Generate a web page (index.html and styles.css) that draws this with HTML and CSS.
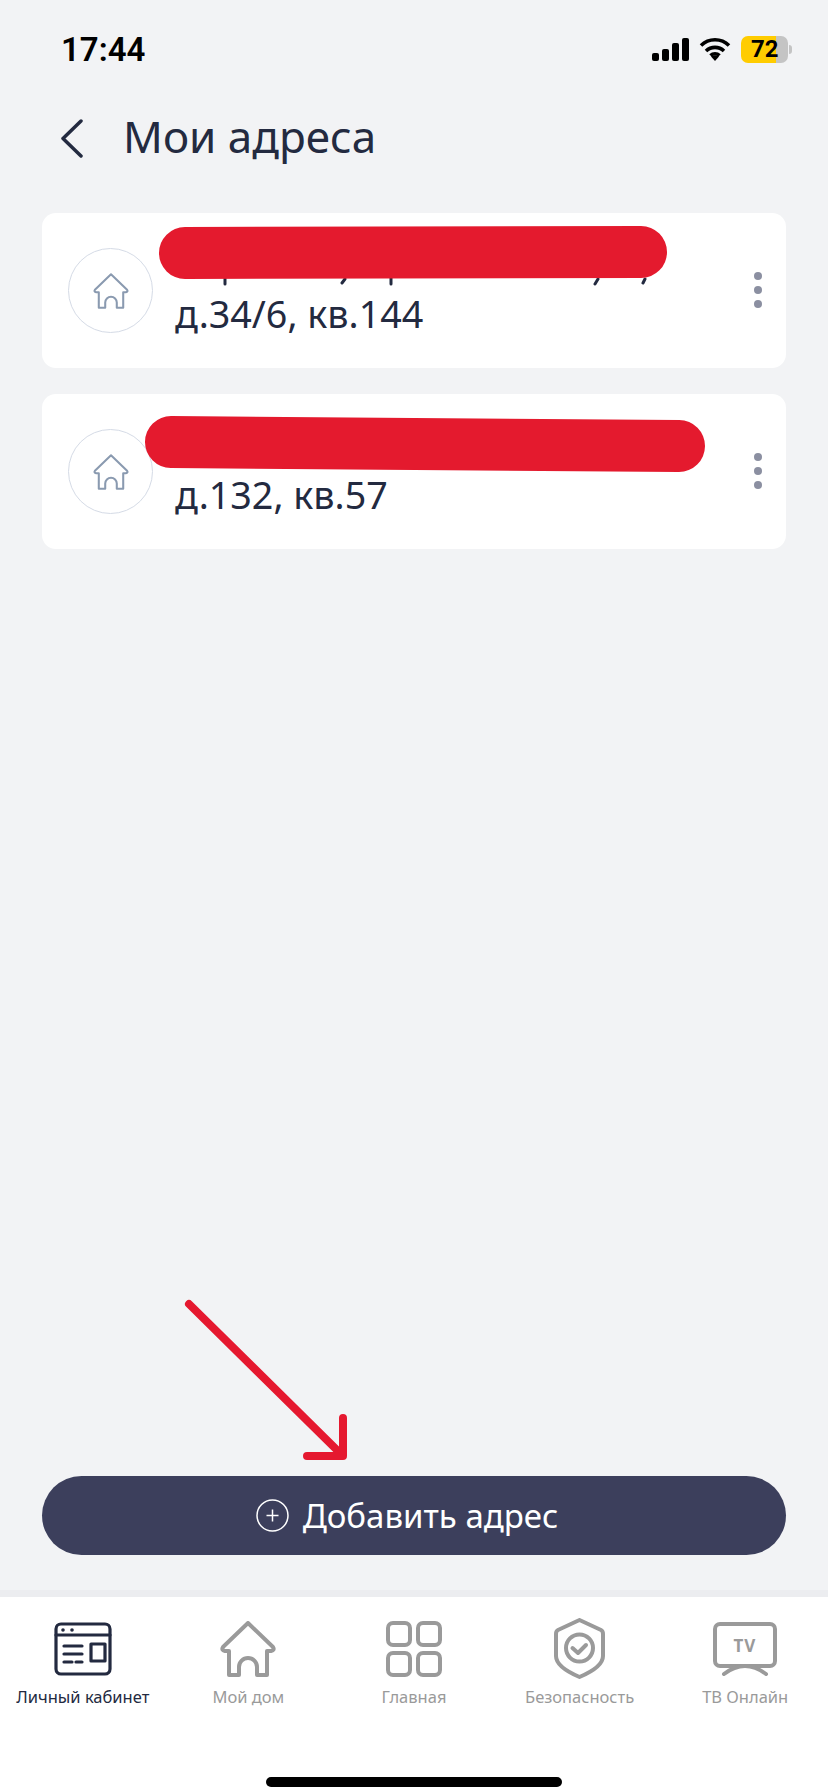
FILE: index.html
```html
<!DOCTYPE html>
<html lang="ru">
<head>
    <meta charset="UTF-8">
    <title>Мои адреса</title>
    <link rel="stylesheet" href="styles.css">
</head>
<body>
    <svg class="defs" width="0" height="0">
        <symbol id="ic-home" viewBox="0 0 56 56">
            <path d="M28 2 L53 26 Q55 29 51 30 L47 30 L47 54 L37 54 L37 46 A9 9 0 0 0 19 46 L19 54 L9 54 L9 30 L5 30 Q1 29 3 26 Z"/>
        </symbol>
    </svg>

    <div class="status">
        <span class="time">17:44</span>
        <div class="status-icons">
            <div class="signal"><i></i><i></i><i></i><i></i></div>
            <svg class="wifi" width="32" height="24" viewBox="0 0 32 24">
                <path d="M2 8.5 A20 20 0 0 1 30 8.5 M7 14 A13 13 0 0 1 25 14 M11.5 18.5 A6.5 6.5 0 0 1 20.5 18.5" fill="none" stroke="#000" stroke-width="3.6"/>
                <path d="M16 24 L12 19.5 Q16 17 20 19.5 Z"/>
            </svg>
            <div class="battery">72</div>
        </div>
    </div>

    <div class="header">
        <svg class="back" width="23" height="39" viewBox="0 0 23 39">
            <path d="M21 2 L3 19.5 L21 37"/>
        </svg>
        <h1>Мои адреса</h1>
    </div>

    <div class="content">
        <div class="card">
            <div class="card-icon">
                <svg width="36" height="36"><use href="#ic-home"/></svg>
            </div>
            <div class="card-text">
                <div class="line-hidden"></div>
                <div class="line">д.34/6, кв.144</div>
            </div>
            <div class="dots"><i></i><i></i><i></i></div>
            <!-- marker over the first line of the address -->
            <svg class="scribble" viewBox="0 0 744 155">
                <path class="tick" d="M183 65 V71 M349 65 V71 M556 66 L553 71 M603 66 L601 70 M303 66 L300 70"/>
                <path class="marker" d="M143 40 L599 39"/>
            </svg>
        </div>
        <div class="card">
            <div class="card-icon">
                <svg width="36" height="36"><use href="#ic-home"/></svg>
            </div>
            <div class="card-text">
                <div class="line-hidden"></div>
                <div class="line">д.132, кв.57</div>
            </div>
            <div class="dots"><i></i><i></i><i></i></div>
            <svg class="scribble" viewBox="0 0 744 155">
                <path class="marker" d="M129 48 L637 52"/>
            </svg>
        </div>
    </div>

    <!-- red arrow pointing at the button -->
    <svg class="arrow" width="828" height="200" viewBox="0 0 828 200">
        <path d="M189 24 L341 174 M343 138 L343 176 L307 176"/>
    </svg>

    <button class="add-btn">
        <svg width="33" height="33" viewBox="0 0 33 33">
            <circle cx="16.5" cy="16.5" r="15.5"/>
            <path d="M16.5 10.5 V22.5 M10.5 16.5 H22.5"/>
        </svg>
        Добавить адрес
    </button>

    <div class="tabbar">
        <div class="tabs">
            <div class="tab active">
                <div class="tab-icon">
                    <svg class="thin" width="58" height="54" viewBox="0 0 58 54">
                        <rect x="2" y="2" width="54" height="50" rx="5"/>
                        <path d="M2 13 H56 M10 24 H28 M10 32 H28 M10 40 H18 M22 40 H28"/>
                        <rect x="37" y="22" width="14" height="17"/>
                        <circle class="solid" cx="9" cy="8" r="1.8"/>
                        <circle class="solid" cx="18" cy="8" r="1.8"/>
                    </svg>
                </div>
                <span>Личный кабинет</span>
            </div>
            <div class="tab">
                <div class="tab-icon">
                    <svg width="56" height="56"><use href="#ic-home"/></svg>
                </div>
                <span>Мой дом</span>
            </div>
            <div class="tab">
                <div class="tab-icon">
                    <svg width="56" height="56" viewBox="0 0 56 56">
                        <rect x="2" y="2" width="22" height="22" rx="5"/>
                        <rect x="32" y="2" width="22" height="22" rx="5"/>
                        <rect x="2" y="32" width="22" height="22" rx="5"/>
                        <rect x="32" y="32" width="22" height="22" rx="5"/>
                    </svg>
                </div>
                <span>Главная</span>
            </div>
            <div class="tab">
                <div class="tab-icon">
                    <svg width="51" height="61" viewBox="0 0 51 61">
                        <path d="M25.5 2 L47 12 Q49 13 49 16 L49 38 Q49 49 25.5 59 Q2 49 2 38 L2 16 Q2 13 4 12 Z"/>
                        <circle cx="25.5" cy="30" r="13.5"/>
                        <path d="M18.5 30 L24 35 L32 27"/>
                    </svg>
                </div>
                <span>Безопасность</span>
            </div>
            <div class="tab">
                <div class="tab-icon">
                    <svg width="64" height="54" viewBox="0 0 64 54">
                        <rect x="2" y="2" width="60" height="42" rx="5"/>
                        <path d="M11 52 Q32 36 53 52"/>
                        <text class="tv-text" x="32" y="30">TV</text>
                    </svg>
                </div>
                <span>ТВ Онлайн</span>
            </div>
        </div>
        <div class="home-bar"></div>
    </div>
</body>
</html>
```
FILE: styles.css
```css
* {
    box-sizing: border-box;
}

body {
    margin: 0;
    width: 828px;
    height: 1792px;
    background: #f2f3f5;
    font-family: "Noto Sans", sans-serif;
    color: #232a40;
    display: flex;
    flex-direction: column;
    position: relative;
    overflow: hidden;
}

.defs {
    position: absolute;
}

/* status bar */
.status {
    height: 92px;
    padding: 0 40px 0 61px;
    display: flex;
    justify-content: space-between;
    align-items: center;
    font-family: Roboto, sans-serif;
    color: #000;
}

.time {
    font-size: 33px;
    font-weight: 600;
    margin-top: 6px;
}

.status-icons {
    display: flex;
    align-items: center;
    gap: 10px;
    margin-top: 6px;
}

.signal {
    display: flex;
    align-items: flex-end;
    gap: 3px;
    height: 23px;
}

.signal i {
    width: 7px;
    background: #000;
    border-radius: 2px;
}

.signal i:nth-child(1) { height: 8px; }
.signal i:nth-child(2) { height: 12px; }
.signal i:nth-child(3) { height: 18px; }
.signal i:nth-child(4) { height: 23px; }

.battery {
    width: 47px;
    height: 27px;
    border-radius: 7px;
    background: linear-gradient(to right, #ffcc00 35px, #c4c4c4 35px);
    font-size: 24px;
    font-weight: 700;
    line-height: 27px;
    padding-left: 10px;
    position: relative;
}

.battery::after {
    content: "";
    position: absolute;
    left: 48px;
    top: 9px;
    width: 3px;
    height: 9px;
    background: #c4c4c4;
    border-radius: 0 3px 3px 0;
}

/* page title */
.header {
    height: 90px;
    padding-left: 60px;
    display: flex;
    align-items: center;
    margin-top: -1px;
}

.back {
    fill: none;
    stroke: #232a40;
    stroke-width: 3.5;
    stroke-linecap: round;
    stroke-linejoin: round;
    margin-top: 4px;
}

h1 {
    margin: 0 0 0 40px;
    font-size: 44px;
    font-weight: 400;
}

/* address list */
.content {
    flex: 1;
    padding: 32px 42px 0;
    display: flex;
    flex-direction: column;
    gap: 26px;
}

.card {
    height: 155px;
    background: #fff;
    border-radius: 14px;
    padding: 0 24px 0 26px;
    display: flex;
    align-items: center;
    position: relative;
}

.card-icon {
    width: 85px;
    height: 85px;
    border: 1.5px solid #d5dbe6;
    border-radius: 50%;
    display: flex;
    align-items: center;
    justify-content: center;
    flex-shrink: 0;
}

.card-icon svg {
    fill: none;
    stroke: #8a9ab0;
    stroke-width: 3.2;
    stroke-linejoin: round;
}

.card-text {
    flex: 1;
    margin-left: 22px;
}

.line-hidden {
    height: 47px;
}

.line {
    font-size: 37.7px;
    line-height: 50px;
}

.dots {
    display: flex;
    flex-direction: column;
    gap: 6px;
    margin-top: -2px;
}

.dots i {
    width: 8px;
    height: 8px;
    border-radius: 50%;
    background: #8b8fa1;
}

.scribble {
    position: absolute;
    left: 0;
    top: 0;
    width: 744px;
    height: 155px;
    fill: none;
    stroke-linecap: round;
}

.marker {
    stroke: #e41a2e;
    stroke-width: 52;
}

.tick {
    stroke: #232a40;
    stroke-width: 3;
}

.arrow {
    position: absolute;
    left: 0;
    top: 1280px;
    fill: none;
    stroke: #e5182f;
    stroke-width: 8;
    stroke-linecap: round;
    stroke-linejoin: round;
}

/* main action */
.add-btn {
    height: 79px;
    margin: 0 42px 42px;
    padding: 0 14px 0 0;
    border: 0;
    border-radius: 40px;
    background: #3c3f5c;
    color: #fff;
    font-family: inherit;
    font-size: 33px;
    display: flex;
    align-items: center;
    justify-content: center;
    gap: 14px;
}

.add-btn svg {
    fill: none;
    stroke: #fff;
    stroke-width: 1.5;
}

/* bottom navigation */
.tabbar {
    height: 195px;
    background: #fff;
    box-shadow: 0 -7px 0 #ecedf0;
    padding-top: 21px;
    display: flex;
    flex-direction: column;
    align-items: center;
}

.tabs {
    width: 100%;
    display: grid;
    grid-template-columns: repeat(5, 1fr);
}

.tab {
    display: flex;
    flex-direction: column;
    align-items: center;
    color: #9a9a9a;
    font-size: 16.5px;
    line-height: 22px;
}

.tab.active {
    color: #232a40;
}

.tab-icon {
    height: 61px;
    margin-bottom: 7px;
    display: flex;
    align-items: center;
}

.tab-icon svg {
    fill: none;
    stroke: currentColor;
    stroke-width: 4;
    stroke-linecap: round;
    stroke-linejoin: round;
}

.tab-icon .thin {
    stroke-width: 3.2;
}

.tab-icon .solid {
    fill: currentColor;
    stroke: none;
}

.tv-text {
    fill: currentColor;
    stroke: none;
    font-size: 17px;
    font-weight: 700;
    text-anchor: middle;
    letter-spacing: 1px;
}

.home-bar {
    width: 296px;
    height: 10px;
    margin-top: 69px;
    border-radius: 5px;
    background: #000;
}
```
